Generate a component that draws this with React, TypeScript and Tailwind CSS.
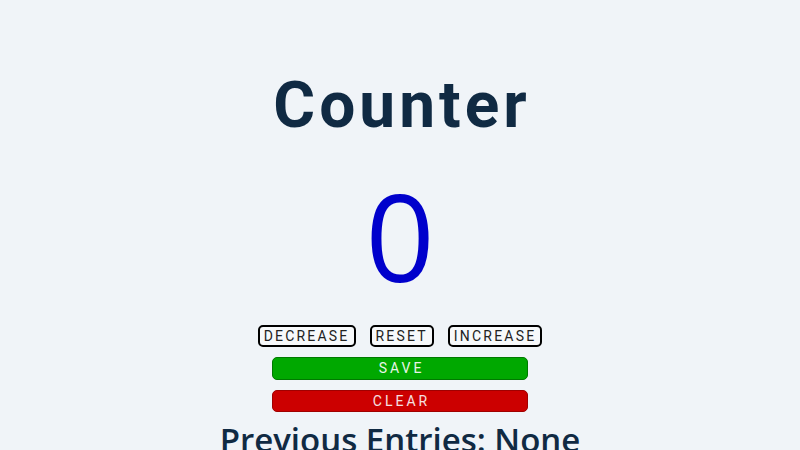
const outline =
  "rounded-[5px] border-2 border-black bg-[#f7f9fb] px-[4px] text-[14px] leading-[18px] tracking-[2.2px] text-[#222]";

export default function App() {
  return (
    <div className="flex h-[450px] w-[800px] flex-col items-center overflow-hidden bg-[#f0f4f8] font-['Roboto',sans-serif]">
      <h1 className="mt-[67px] pl-[4px] text-[64px] font-bold leading-[78px] tracking-[4px] text-[#102a43]">
        Counter
      </h1>
      <div className="mt-[28px] font-['Open_Sans',sans-serif] text-[121px] font-medium leading-[124px] text-[#0000cc]">
        0
      </div>
      <div className="mt-[28px] flex gap-[14px]">
        <button className={outline}>DECREASE</button>
        <button className={outline}>RESET</button>
        <button className={outline}>INCREASE</button>
      </div>
      <button className="mt-[10px] h-[23px] w-[256px] rounded-[5px] border border-[#007a00] bg-[#00a800] pl-[3px] text-[14px] tracking-[3px] text-[#e8f5e8]">
        SAVE
      </button>
      <button className="mt-[10px] h-[22px] w-[256px] rounded-[5px] border border-[#a00000] bg-[#cc0000] pl-[3px] text-[14px] tracking-[3px] text-[#f5e0e0]">
        CLEAR
      </button>
      <h2 className="mt-[8px] shrink-0 font-['Open_Sans',sans-serif] text-[33px] font-semibold leading-[40px] text-[#102a43]">
        Previous Entries: None
      </h2>
    </div>
  );
}
